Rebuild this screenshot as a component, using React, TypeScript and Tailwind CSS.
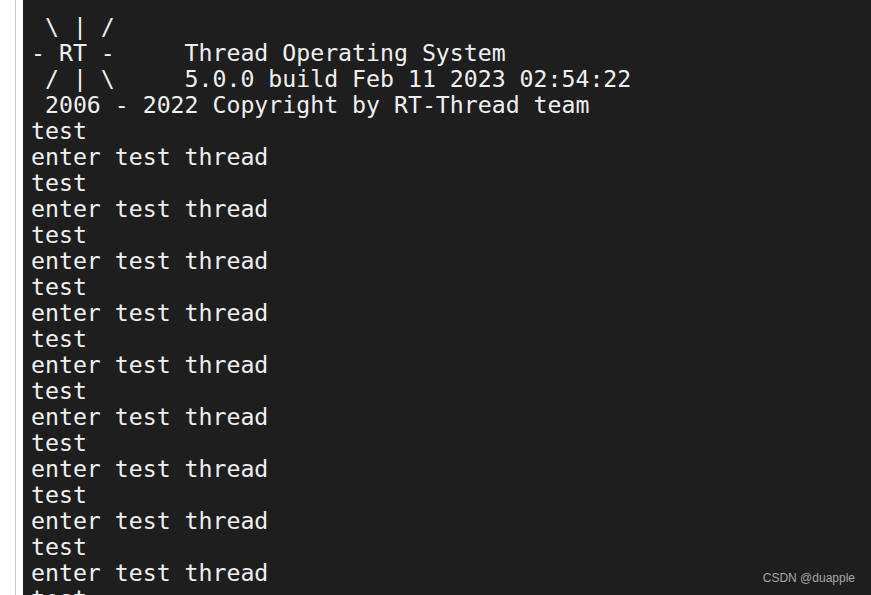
const banner = [
  ' \\ | /',
  '- RT -     Thread Operating System',
  ' / | \\     5.0.0 build Feb 11 2023 02:54:22',
  ' 2006 - 2022 Copyright by RT-Thread team',
]

const lines: string[] = [...banner]
for (let i = 0; i < 9; i++) {
  lines.push('test')
  lines.push('enter test thread')
}
lines.push('test')

export default function App() {
  return (
    <div className="flex h-[595px] w-[871px] overflow-hidden bg-white">
      <div className="w-[15px] shrink-0" />
      <div className="w-px shrink-0 bg-[#c8c8c8]" />
      <div className="w-[7px] shrink-0" />
      <div className="relative flex-1 bg-[#1e1e1e] pl-[8px] pt-[14px]">
        <pre className="m-0 font-['DejaVu_Sans_Mono',monospace] text-[23.2px] leading-[26px] text-[#f0f0f0]">
          {lines.join('\n')}
        </pre>
        <div className="absolute bottom-[8px] right-[16px] font-['Liberation_Sans',sans-serif] text-[12px] text-[#a8a8a8]">
          CSDN @duapple
        </div>
      </div>
    </div>
  )
}
